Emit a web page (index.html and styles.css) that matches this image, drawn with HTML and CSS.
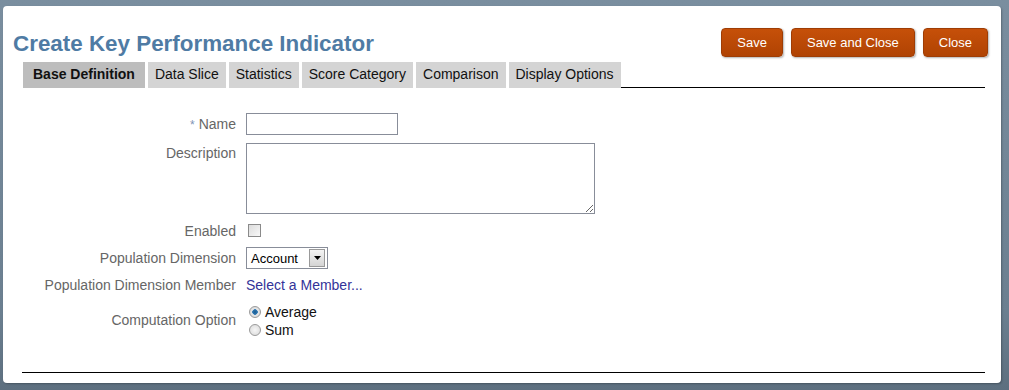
FILE: index.html
```html
<!DOCTYPE html>
<html lang="en">
<head>
  <meta charset="UTF-8" />
  <title>Create Key Performance Indicator</title>
  <link rel="stylesheet" href="styles.css">
</head>
<body>

  <div class="dialog">
    <div class="header">
      <h1>Create Key Performance Indicator</h1>
      <div class="actions">
        <button class="btn">Save</button>
        <button class="btn">Save and Close</button>
        <button class="btn">Close</button>
      </div>
    </div>

    <div class="tabs">
      <div class="tab active">Base Definition</div>
      <div class="tab">Data Slice</div>
      <div class="tab">Statistics</div>
      <div class="tab">Score Category</div>
      <div class="tab">Comparison</div>
      <div class="tab">Display Options</div>
      <div class="tab-fill"></div>
    </div>

    <div class="form">
      <label class="lbl"><span class="req">*</span> Name</label>
      <div><input type="text" class="txt" /></div>

      <label class="lbl lbl-top">Description</label>
      <div><textarea class="area"></textarea></div>

      <label class="lbl">Enabled</label>
      <div><span class="check"></span></div>

      <label class="lbl">Population Dimension</label>
      <div>
        <div class="select">
          <span class="select-val">Account</span>
          <span class="select-btn">
            <svg width="7" height="4" viewBox="0 0 7 4"><path d="M0 0h7L3.5 4z" fill="#000"/></svg>
          </span>
        </div>
      </div>

      <label class="lbl">Population Dimension Member</label>
      <div><a class="link" href="#">Select a Member...</a></div>

      <label class="lbl">Computation Option</label>
      <div class="radios">
        <div class="radio-item"><span class="radio on"></span>Average</div>
        <div class="radio-item"><span class="radio"></span>Sum</div>
      </div>
    </div>

    <div class="footer-line"></div>
  </div>

</body>
</html>
```

FILE: styles.css
```css
body {
  margin: 0;
  width: 1009px;
  height: 390px;
  background: linear-gradient(#7a8e9f, #6b7f90 80%, #5d6f7f);
  font-family: Arial, "Liberation Sans", sans-serif;
  overflow: hidden;
}

.dialog {
  box-sizing: border-box;
  margin: 6px 0 0 3px;
  width: 998px;
  height: 377px;
  background: #fff;
  border-radius: 4px;
  box-shadow: 1px 1px 2px rgba(0, 0, 0, 0.25);
  padding: 0 0 0 10px;
}

.header {
  display: flex;
  justify-content: space-between;
  align-items: flex-start;
  padding-top: 22px;
  padding-right: 13px;
}

h1 {
  margin: 4px 0 0 0;
  font-size: 22.4px;
  font-weight: bold;
  color: #4f7ba4;
  line-height: 24px;
}

.actions {
  display: flex;
  gap: 8px;
}

.btn {
  height: 29px;
  padding: 0 15px;
  border: 1px solid #9e3d05;
  border-radius: 4px;
  background: linear-gradient(#c65009, #b04303);
  color: #fff;
  font-family: Arial, "Liberation Sans", sans-serif;
  font-size: 13px;
  box-shadow: 1px 1px 2px rgba(0, 0, 0, 0.3);
}

.tabs {
  display: flex;
  margin: 5px 0 0 10px;
  padding-right: 16px;
}

.tab {
  height: 26px;
  line-height: 24px;
  padding: 0 7px;
  margin-right: 3px;
  background: #d4d4d4;
  color: #111;
  font-size: 14px;
}

.tab.active {
  background: #bdbdbd;
  font-weight: bold;
  padding: 0 10px;
}

.tab-fill {
  flex: 1;
  border-bottom: 1px solid #000;
  margin-left: -3px;
}

.form {
  display: grid;
  grid-template-columns: 223px 1fr;
  column-gap: 10px;
  row-gap: 8px;
  margin-top: 25px;
  font-size: 14px;
}

.lbl {
  text-align: right;
  color: #666;
  align-self: center;
}

.lbl-top {
  align-self: start;
  padding-top: 2px;
}

.req {
  color: #7f93b5;
  font-size: 12px;
}

.txt {
  box-sizing: border-box;
  width: 152px;
  height: 22px;
  border: 1px solid #888d99;
  margin: 0;
  display: block;
}

.area {
  box-sizing: border-box;
  width: 349px;
  height: 71px;
  border: 1px solid #888d99;
  margin: 0;
  display: block;
  resize: both;
}

.check {
  display: block;
  width: 11px;
  height: 11px;
  margin: 2px 0 2px 2px;
  border: 1px solid #8a8a8a;
  background: linear-gradient(135deg, #dcdcdc, #f8f8f8);
}

.select {
  display: inline-flex;
  align-items: center;
  box-sizing: border-box;
  width: 82px;
  height: 22px;
  border: 1px solid #888d99;
}

.select-val {
  flex: 1;
  padding-left: 4px;
  font-size: 13px;
  color: #000;
}

.select-btn {
  display: flex;
  align-items: center;
  justify-content: center;
  width: 14px;
  height: 16px;
  margin-right: 2px;
  border: 1px solid #999;
  background: linear-gradient(#f4f4f4, #d4d4d4);
}

.link {
  color: #333399;
  text-decoration: none;
}

.radios {
  display: flex;
  flex-direction: column;
  margin-top: 2px;
}

.radio-item {
  display: flex;
  align-items: center;
  color: #111;
  height: 18px;
}

.radio {
  box-sizing: border-box;
  width: 12px;
  height: 12px;
  border: 1px solid #9a9a9a;
  border-radius: 50%;
  background: radial-gradient(#f6f6f6, #d8d8d8);
  margin: 0 4px 0 3px;
}

.radio.on {
  background: radial-gradient(circle, #1b5a8c 0, #2f78b4 2.5px, #e8e8e8 3px, #cfcfcf);
}

.footer-line {
  margin: 33px 16px 0 9px;
  border-top: 1px solid #000;
}
```
